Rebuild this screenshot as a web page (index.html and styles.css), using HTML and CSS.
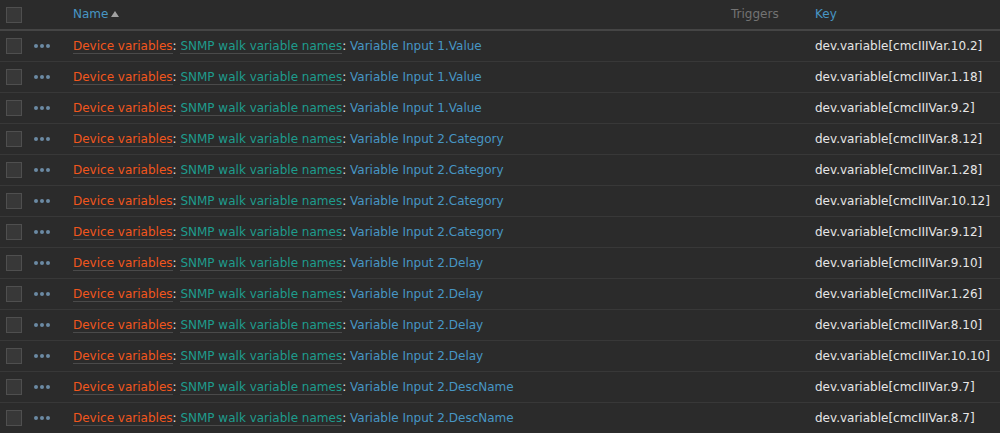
FILE: index.html
```html
<!DOCTYPE html>
<html lang="en">
<head>
    <meta charset="UTF-8">
    <title>Items</title>
    <link rel="stylesheet" href="styles.css">
</head>
<body>
    <table class="list-table">
        <colgroup>
            <col class="col-check">
            <col class="col-actions">
            <col class="col-name">
            <col class="col-triggers">
            <col class="col-key">
        </colgroup>
        <thead>
            <tr>
                <th class="cell-check"><span class="checkbox"></span></th>
                <th></th>
                <th><a class="sort-link" href="#">Name</a><span class="arrow-up"></span></th>
                <th class="muted">Triggers</th>
                <th><a class="sort-link" href="#">Key</a></th>
            </tr>
        </thead>
        <tbody id="rows"></tbody>
    </table>

    <script>
        // item rows
        const items = [
            ['Variable Input 1.Value', 'dev.variable[cmcIIIVar.10.2]'],
            ['Variable Input 1.Value', 'dev.variable[cmcIIIVar.1.18]'],
            ['Variable Input 1.Value', 'dev.variable[cmcIIIVar.9.2]'],
            ['Variable Input 2.Category', 'dev.variable[cmcIIIVar.8.12]'],
            ['Variable Input 2.Category', 'dev.variable[cmcIIIVar.1.28]'],
            ['Variable Input 2.Category', 'dev.variable[cmcIIIVar.10.12]'],
            ['Variable Input 2.Category', 'dev.variable[cmcIIIVar.9.12]'],
            ['Variable Input 2.Delay', 'dev.variable[cmcIIIVar.9.10]'],
            ['Variable Input 2.Delay', 'dev.variable[cmcIIIVar.1.26]'],
            ['Variable Input 2.Delay', 'dev.variable[cmcIIIVar.8.10]'],
            ['Variable Input 2.Delay', 'dev.variable[cmcIIIVar.10.10]'],
            ['Variable Input 2.DescName', 'dev.variable[cmcIIIVar.9.7]'],
            ['Variable Input 2.DescName', 'dev.variable[cmcIIIVar.8.7]']
        ];

        const dots = '<svg width="16" height="4" viewBox="0 0 16 4"><circle cx="2" cy="2" r="2"/><circle cx="8" cy="2" r="2"/><circle cx="14" cy="2" r="2"/></svg>';

        document.getElementById('rows').innerHTML = items.map(([name, key]) => `
            <tr>
                <td class="cell-check"><span class="checkbox"></span></td>
                <td><span class="dots">${dots}</span></td>
                <td><a class="link-alt orange" href="#">Device variables</a>: <a class="link-alt teal" href="#">SNMP walk variable names</a>: <a class="link" href="#">${name}</a></td>
                <td></td>
                <td class="key">${key}</td>
            </tr>
        `).join('');
    </script>
</body>
</html>
```

FILE: styles.css
```css
:root {
    --bg: #2b2b2b;
    --border: #383838;
    --header-border: #454545;
    --link: #4796c4;
    --text: #e6e6e6;
    --muted: #737373;
    --orange: #f2561d;
    --teal: #1e9c8d;
}

body {
    margin: 0;
    background: var(--bg);
    font-family: "DejaVu Sans", sans-serif;
    font-size: 12px;
    color: var(--text);
}

.list-table {
    width: 100%;
    border-collapse: collapse;
    table-layout: fixed;
}

.col-check { width: 29px; }
.col-actions { width: 39px; }
.col-triggers { width: 84px; }
.col-key { width: 190px; }

th, td {
    padding: 0 5px;
    text-align: left;
    white-space: nowrap;
    vertical-align: middle;
}

th {
    height: 28px;
    padding-bottom: 1px;
    font-weight: normal;
    border-bottom: 2px solid var(--header-border);
}

td {
    height: 30px;
    border-bottom: 1px solid var(--border);
}

.cell-check {
    padding-left: 6px;
}

th.cell-check {
    padding-bottom: 0;
}

.checkbox {
    display: block;
    width: 14px;
    height: 14px;
    background: #383838;
    border: 1px solid #4f4f4f;
}

.sort-link {
    color: var(--link);
    text-decoration: none;
}

.arrow-up {
    display: inline-block;
    margin-left: 3px;
    border-left: 4px solid transparent;
    border-right: 4px solid transparent;
    border-bottom: 6px solid #a0a0a0;
    vertical-align: 1px;
}

.muted {
    color: var(--muted);
}

.dots {
    display: block;
    line-height: 0;
}

.dots svg {
    fill: #6b8aa3;
}

a {
    text-decoration: none;
}

.link {
    color: var(--link);
}

.link-alt {
    border-bottom: 1px solid #4a4a4a;
}

.orange {
    color: var(--orange);
}

.teal {
    color: var(--teal);
}

.key {
    color: var(--text);
}
```
